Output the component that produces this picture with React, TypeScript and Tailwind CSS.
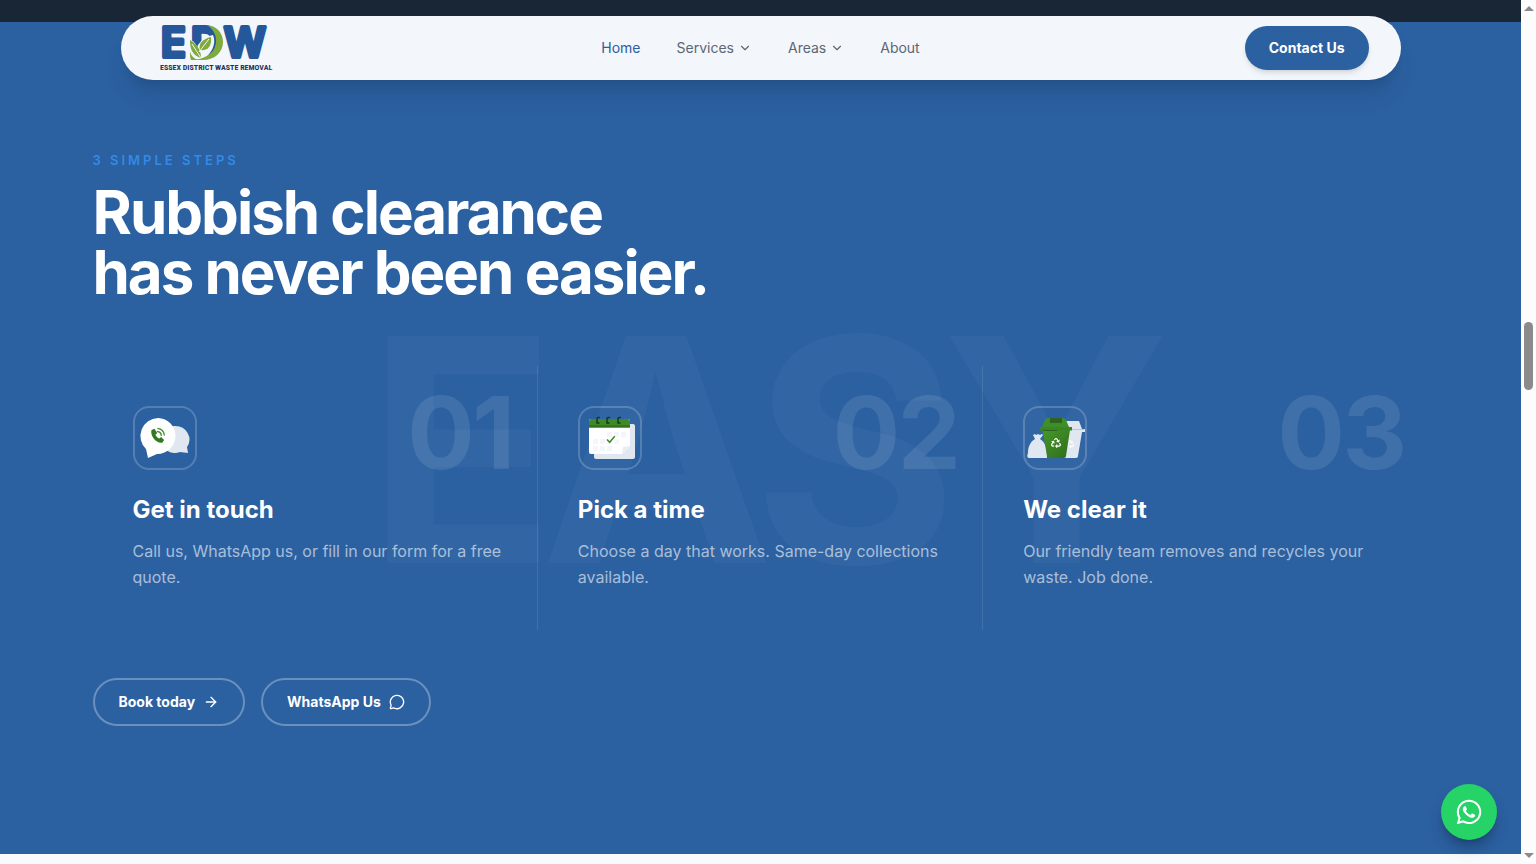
import React from 'react';
import { ArrowRight, ChevronDown, MessageCircle } from 'lucide-react';
import { FaRecycle, FaWhatsapp } from 'react-icons/fa';

const Logo: React.FC = () => (
  <svg viewBox="0 0 125 48" className="h-12 w-[125px] overflow-visible" role="img" aria-label="Essex District Waste Removal">
    <g
      fill="#25589b"
      stroke="#25589b"
      strokeWidth="4"
      strokeLinejoin="round"
      fontFamily="Inter, sans-serif"
      fontWeight="600"
      fontSize="41"
    >
      <text x="8" y="33">E</text>
      <text x="38" y="33">D</text>
      <text x="71" y="33">W</text>
    </g>
    {/* leaf mark laid over the D */}
    <path d="M36 15C41 17 43 20 44 23C47 17 52 13 60 11C64 20 58 30 50 36L36 37Z" fill="#f3f6fa" />
    <path d="M54 1C64 2 70 9 70 18C70 28 62 36 50 36L42 36C55 34 63 27 63 17C63 10 60 5 54 1Z" fill="#7fab3d" />
    <path d="M58 13C50 15 45 19 47 26C55 27 59 22 58 13Z" fill="#7fab3d" />
    <path d="M37 16C37 25 39 31 48 34C48 26 44 20 37 16Z" fill="#7fab3d" />
    <path d="M37 27C38 32 41 35 46 36L38 36C37 34 37 31 37 27Z" fill="#7fab3d" />
    <path d="M56 15L46 28M39 20L48 34" stroke="#f3f6fa" strokeWidth="1" fill="none" />
    <text
      x="7"
      y="46"
      fill="#1b3557"
      fontFamily="'Liberation Sans Narrow', 'Roboto Condensed', 'Open Sans Condensed', Roboto, sans-serif"
      fontWeight="700"
      fontSize="8"
    >
      ESSEX DISTRICT WASTE REMOVAL
    </text>
  </svg>
);

const ChatIcon: React.FC = () => (
  <svg viewBox="0 0 64 64" className="size-16" aria-hidden="true">
    <path d="M42 20a14 13.500 0 0 1 12 21l1 6-8-1a14 13.500 0 1 1-5-26Z" fill="#e1e7f0" />
    <path d="M25 12a18 18 0 1 1-1 36l-9 4-2-9A18 18 0 0 1 25 12Z" fill="#fff" />
    <path
      d="M18.500 24l3-1.300 2.700 4.300-1.700 1.700c.8 1.900 2 3.100 3.800 3.900l1.800-1.500 3 2.800-1.600 2.600c-5.500 1.700-12.800-6.500-11-12.500Z"
      fill="#34791f"
    />
    <path d="M25 22.500c3.300.2 6 3 6.300 6.500M24.500 25.500c2 .2 3.500 1.700 3.800 3.800" fill="none" stroke="#4b8d32" strokeWidth="1.400" strokeLinecap="round" />
  </svg>
);

const CalendarIcon: React.FC = () => (
  <svg viewBox="0 0 64 64" className="size-16" aria-hidden="true">
    <rect x="16" y="18" width="41" height="35" rx="2" fill="#e1e7f0" />
    <path d="M11 15a2 2 0 0 1 2-2h37a2 2 0 0 1 2 2v25l-8 8H13a2 2 0 0 1-2-2Z" fill="#fff" />
    <path d="M44 48l1-7 7-1Z" fill="#e9edf4" />
    <path d="M11 15a2 2 0 0 1 2-2h37a2 2 0 0 1 2 2v6.500H11Z" fill="#3f8a26" />
    <path d="M11 19h41v2.500H11Z" fill="#34731f" />
    <g fill="#f4f6fa">
      <path d="M29 26h5v5h-5zM36 26h5v5h-5zM43 26h5v5h-5z" />
      <path d="M15 33h5v5h-5zM22 33h5v5h-5zM29 33h5v5h-5zM36 33h5v5h-5z" />
      <path d="M15 40h5v5h-5zM22 40h5v5h-5zM29 40h5v5h-5z" />
    </g>
    <path d="M22 11.500h-1.500a1.500 1.500 0 0 0-1.500 1.500v4h2.500M32 11.500h-1.500a1.500 1.500 0 0 0-1.500 1.500v4h2.500M43 11.500h-1.500a1.500 1.500 0 0 0-1.500 1.500v4h2.500" fill="none" stroke="#143c1c" strokeWidth="1.500" />
    <path d="M29 33.500l2.700 2.800 5-6" fill="none" stroke="#3f8a26" strokeWidth="1.500" />
  </svg>
);

const BinIcon: React.FC = () => (
  <svg viewBox="0 0 64 64" className="size-16" aria-hidden="true">
    <defs>
      <linearGradient id="bin" x1="0" y1="0" x2="1" y2="1">
        <stop offset="0" stopColor="#46992b" />
        <stop offset="1" stopColor="#2f6c1b" />
      </linearGradient>
    </defs>
    <g fill="#e1e7f0">
      <path d="M12 33l-2-4 2-1 1 1 2-1 2 1 2-1 1 1-3 4c6 4 7 9 7 19H6c-2 0-2-3-1-5 0-6 2-11 7-14Z" />
      <path d="M42 15h14l3 8h3v3h-3l-4 24c0 1-1 2-2 2H41Z" />
    </g>
    <path d="M45 23.500h16" stroke="#b9c6da" strokeWidth="1" />
    <FaRecycle x="43" y="34" size={8} color="#fff" />
    <path d="M19.500 24H47l-4 26c0 1-1 2-2 2H26c-1 0-2-1-2-2Z" fill="url(#bin)" />
    <path d="M19 21l3-7c1-1.500 2-2 4-2h13c2 0 3 .5 4 2l3 7Z" fill="#3f8f28" />
    <path d="M27 12h12v5H27Z" fill="#2c6420" />
    <path d="M17 21h32v3.500H17Z" fill="#3a8524" />
    <path d="M20 24.500h14" stroke="#2b651b" strokeWidth="1" />
    <FaRecycle x="28" y="32" size={10} color="#fff" />
  </svg>
);

const steps = [
  { number: '01', title: 'Get in touch', text: 'Call us, WhatsApp us, or fill in our form for a free quote.', icon: ChatIcon },
  { number: '02', title: 'Pick a time', text: 'Choose a day that works. Same-day collections available.', icon: CalendarIcon },
  { number: '03', title: 'We clear it', text: 'Our friendly team removes and recycles your waste. Job done.', icon: BinIcon },
];

const Header: React.FC = () => (
  <header className="absolute inset-x-0 top-4 z-20 mx-auto grid h-16 max-w-[1280px] grid-cols-[1fr_auto_1fr] items-center rounded-full bg-[#f3f6fa] px-8 shadow-xl shadow-black/10">
    <a href="#home">
      <Logo />
    </a>
    <nav className="flex items-center gap-9 text-sm text-[#5c6675]">
      <a href="#home" className="text-[#2b60a1]">Home</a>
      <a href="#services" className="flex items-center gap-1">
        Services <ChevronDown className="size-3.5" />
      </a>
      <a href="#areas" className="flex items-center gap-1">
        Areas <ChevronDown className="size-3.5" />
      </a>
      <a href="#about">About</a>
    </nav>
    <button type="button" className="h-11 justify-self-end rounded-full bg-[#2b60a1] px-6 text-sm font-bold text-white shadow-md">
      Contact Us
    </button>
  </header>
);

const Steps: React.FC = () => (
  <section className="relative overflow-hidden bg-[#2b60a1] py-32 text-white">
    <div className="pointer-events-none absolute inset-0 flex items-center justify-center pt-6 text-[312px] leading-none font-bold tracking-tighter text-white/[0.03] select-none" aria-hidden="true">
      EASY
    </div>
    <div className="relative mx-auto max-w-[1400px] px-8">
      <p className="text-[13px] leading-5 font-semibold tracking-[3px] text-[#338ae6] uppercase">3 Simple Steps</p>
      <h2 className="mt-3 text-6xl leading-[60px] font-bold tracking-[-2px]">
        Rubbish clearance
        <br />
        has never been easier.
      </h2>
      <div className="mt-16 grid grid-cols-3">
        {steps.map(({ number, title, text, icon: Icon }) => (
          <article key={number} className="border-r border-white/10 py-10 pr-8 pl-10 last:border-r-0">
            <div className="flex h-16 items-center justify-between">
              <div className="relative size-16 rounded-2xl">
                <Icon />
                <span className="absolute inset-0 rounded-2xl border-2 border-white/20" />
              </div>
              <span className="-mr-2 pb-2.5 text-[100px] leading-none font-bold tracking-tight text-white/10">{number}</span>
            </div>
            <h3 className="mt-6 text-2xl leading-8 font-bold">{title}</h3>
            <p className="mt-3 text-base leading-[26px] text-white/60">{text}</p>
          </article>
        ))}
      </div>
      <div className="mt-12 flex gap-4">
        <a href="#book" className="flex h-12 items-center gap-2 rounded-full border-2 border-white/30 px-6 text-sm font-bold">
          Book today <ArrowRight className="size-4" />
        </a>
        <a href="#whatsapp" className="flex h-12 items-center gap-2 rounded-full border-2 border-white/30 px-6 text-sm font-bold">
          WhatsApp Us <MessageCircle className="size-4" />
        </a>
      </div>
    </div>
  </section>
);

const Scrollbar: React.FC = () => (
  <div className="flex w-[15px] shrink-0 flex-col items-center justify-between bg-[#fcfcfc] py-1.5" aria-hidden="true">
    <svg viewBox="0 0 10 5" className="h-[5px] w-2.5"><path d="M0 5L5 0L10 5Z" fill="#8b8b8b" /></svg>
    <div className="mb-38 h-[68px] w-[9px] rounded-full bg-[#8b8b8b]" />
    <svg viewBox="0 0 10 5" className="h-[5px] w-2.5"><path d="M0 0L5 5L10 0Z" fill="#8b8b8b" /></svg>
  </div>
);

export default function App() {
  return (
    <div className="flex min-h-screen font-['Inter',sans-serif]">
      <main className="relative min-w-0 flex-1 bg-[#f8fafc]">
        <div className="h-[22px] bg-[#182635]" />
        <Header />
        <Steps />
        <a
          href="#whatsapp"
          aria-label="Chat on WhatsApp"
          className="absolute right-6 bottom-6 z-20 flex size-14 items-center justify-center rounded-full bg-[#25d366] text-white shadow-lg shadow-black/25"
        >
          <FaWhatsapp className="size-7" />
        </a>
      </main>
      <Scrollbar />
    </div>
  );
}
